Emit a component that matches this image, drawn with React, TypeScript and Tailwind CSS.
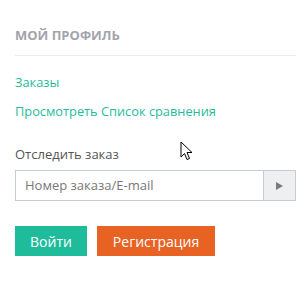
export default function App() {
  return (
    <div className="relative w-[307px] h-[281px] bg-white font-['Open_Sans',sans-serif] pl-[15px] pr-[11px] pt-[25px]">
      {/* Profile heading */}
      <h3 className="text-[13px] leading-[20px] font-bold uppercase text-[#a3a3ab] pb-[10px] border-b border-[#ebebeb]">
        Мой профиль
      </h3>

      {/* Links */}
      <ul className="mt-[17px] flex flex-col gap-[11px] text-[12.8px] leading-[18px] text-[#1fbc9c]">
        <li>
          <a href="#">Заказы</a>
        </li>
        <li>
          <a href="#">Просмотреть Список сравнения</a>
        </li>
      </ul>

      {/* Track order */}
      <div className="mt-[25px]">
        <label className="block text-[13px] leading-[18px] text-[#555]">Отследить заказ</label>
        <div className="mt-[7px] flex h-[31px] border border-[#c7cbd3]">
          <input
            className="flex-1 min-w-0 px-[9px] text-[13px] text-[#555] placeholder:text-[#777] outline-none"
            placeholder="Номер заказа/E-mail"
          />
          <button className="w-[32px] flex items-center justify-center bg-[#eeeff1] border-l border-[#c7cbd3]">
            <svg width="7" height="8" viewBox="0 0 7 8">
              <path d="M0 0 L7 4 L0 8 Z" fill="#7a7a7a" />
            </svg>
          </button>
        </div>
      </div>

      {/* Actions */}
      <div className="mt-[25px] flex gap-[10px]">
        <button className="h-[30px] w-[72px] bg-[#1fbc9c] text-white text-[14px]">Войти</button>
        <button className="h-[30px] w-[118px] bg-[#e86224] text-white text-[14px]">Регистрация</button>
      </div>

      {/* Mouse pointer */}
      <svg className="absolute left-[180px] top-[141px]" width="13" height="20" viewBox="0 0 13 20">
        <path d="M1 1 L1 16 L4.5 12.5 L7 18.5 L9.5 17.5 L7 11.5 L12 11.5 Z" fill="white" stroke="black" strokeWidth="1" />
      </svg>
    </div>
  );
}
